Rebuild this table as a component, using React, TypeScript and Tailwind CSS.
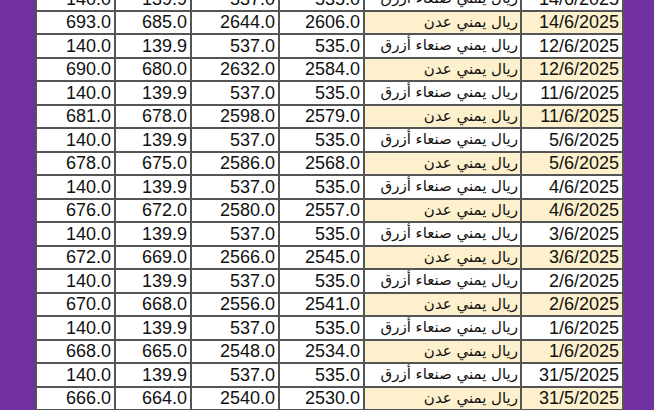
import React from "react";

type Row = {
  a: string;
  b: string;
  c: string;
  d: string;
  aden: boolean;
  date: string;
};

const blue = (date: string): Row => ({
  a: "140.0",
  b: "139.9",
  c: "537.0",
  d: "535.0",
  aden: false,
  date,
});

const aden = (a: string, b: string, c: string, d: string, date: string): Row => ({
  a,
  b,
  c,
  d,
  aden: true,
  date,
});

const rows: Row[] = [
  blue("14/6/2025"),
  aden("693.0", "685.0", "2644.0", "2606.0", "14/6/2025"),
  blue("12/6/2025"),
  aden("690.0", "680.0", "2632.0", "2584.0", "12/6/2025"),
  blue("11/6/2025"),
  aden("681.0", "678.0", "2598.0", "2579.0", "11/6/2025"),
  blue("5/6/2025"),
  aden("678.0", "675.0", "2586.0", "2568.0", "5/6/2025"),
  blue("4/6/2025"),
  aden("676.0", "672.0", "2580.0", "2557.0", "4/6/2025"),
  blue("3/6/2025"),
  aden("672.0", "669.0", "2566.0", "2545.0", "3/6/2025"),
  blue("2/6/2025"),
  aden("670.0", "668.0", "2556.0", "2541.0", "2/6/2025"),
  blue("1/6/2025"),
  aden("668.0", "665.0", "2548.0", "2534.0", "1/6/2025"),
  blue("31/5/2025"),
  aden("666.0", "664.0", "2540.0", "2530.0", "31/5/2025"),
];

const num =
  "bg-white h-[21.5px] flex items-center justify-end pr-[3px] text-[18px] leading-none text-[#111] font-['Liberation_Sans',Arial,sans-serif]";

const RateTable = () => {
  return (
    <div className="w-[654px] h-[410px] overflow-hidden flex bg-[#7030a0]">
      <div className="w-[35px] shrink-0 bg-[#7030a0]" />
      <div className="w-[589px] shrink-0 bg-[#555555] px-[2px] -mt-[13px] h-[440px]">
        <div className="grid grid-cols-[77px_74px_86px_83px_155px_100px] gap-[2px] pt-[1px]">
          {rows.map((r, i) => (
            <React.Fragment key={i}>
              <div className={num}>{r.a}</div>
              <div className={num}>{r.b}</div>
              <div className={num}>{r.c}</div>
              <div className={num}>{r.d}</div>
              <div
                dir="rtl"
                className={`h-[21.5px] flex items-center justify-start pr-[2px] text-[15px] leading-none text-[#111] font-['DejaVu_Sans',sans-serif] ${
                  r.aden ? "bg-[#fdf0cc]" : "bg-white"
                }`}
              >
                {r.aden ? "ريال يمني عدن" : "ريال يمني صنعاء أزرق"}
              </div>
              <div
                className={`${num} ${r.aden ? "!bg-[#fdf0cc]" : ""}`}
              >
                {r.date}
              </div>
            </React.Fragment>
          ))}
        </div>
      </div>
      <div className="flex-1 bg-[#7030a0]" />
    </div>
  );
};

export default function App() {
  return <RateTable />;
}
